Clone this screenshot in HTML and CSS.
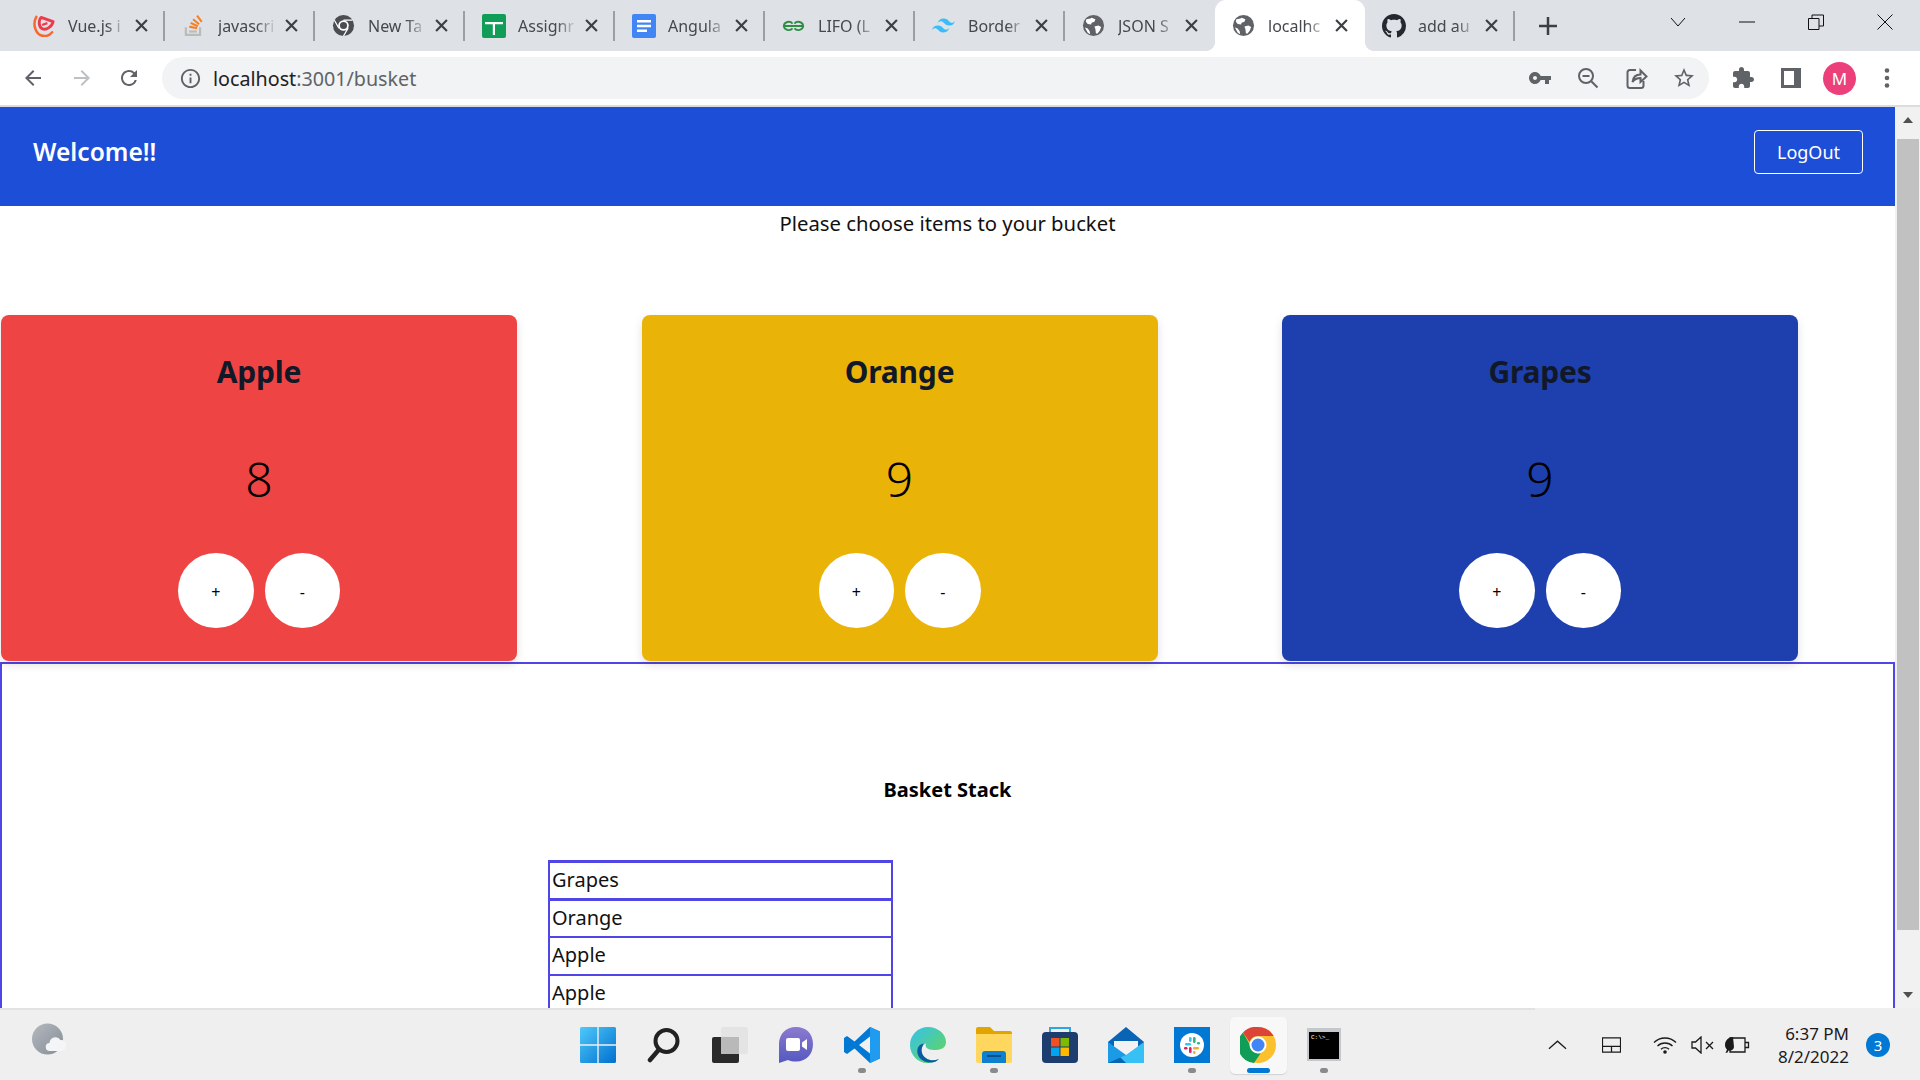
FILE: index.html
```html
<!DOCTYPE html>
<html lang="en">
<head>
    <meta charset="UTF-8">
    <title>localhost:3001/busket</title>
    <link rel="stylesheet" href="styles.css">
</head>
<body>
    <div class="tabstrip">
        <div class="tab">
            <svg class="favicon" viewBox="0 0 24 24"><path d="M4.500 3C.5 10 3 23 13 23c3.500 0 6-1.500 8-4" fill="none" stroke="#f6682f" stroke-width="2.600" stroke-linecap="round"/><path d="M9.500 3.500 22 8c-1 5-7 9-11 7.500C7 14 6.500 7 9.500 3.500z" fill="none" stroke="#ee3a4a" stroke-width="3" stroke-linejoin="round"/><path d="M10.500 11.500 16 9.500" stroke="#ee3a4a" stroke-width="2.400"/></svg>
            <span class="tab-title">Vue.js i</span>
            <svg class="tab-close" viewBox="0 0 12 12"><path d="M1 1 11 11M11 1 1 11"/></svg>
        </div>
        <div class="tab">
            <svg class="favicon" viewBox="2 2 20 21"><path d="M4 14v8h15v-8h-2v6H6v-6z" fill="#bcbbbb"/><path d="M8 17h7v2H8z" fill="#bcbbbb"/><path d="m8 14.500 7 1.500.4-2-7-1.500zM9 11l6.500 3 .8-1.800-6.500-3zM11 7.500l5.500 4.600 1.200-1.500-5.500-4.600zM14.500 4l4.300 5.700 1.500-1.100L16 3z" fill="#f48024"/></svg>
            <span class="tab-title">javascri</span>
            <svg class="tab-close" viewBox="0 0 12 12"><path d="M1 1 11 11M11 1 1 11"/></svg>
        </div>
        <div class="tab">
            <svg class="favicon" viewBox="0 0 24 24"><circle cx="12" cy="12" r="11" fill="#4a4d51"/><circle cx="12" cy="12" r="5.500" fill="#fff"/><circle cx="12" cy="12" r="3.700" fill="#4a4d51"/><path d="M12 6.500h9.500M7.200 14.800 2.500 6.500M16.800 14.800 12 23" stroke="#fff" stroke-width="1.300"/></svg>
            <span class="tab-title">New Ta</span>
            <svg class="tab-close" viewBox="0 0 12 12"><path d="M1 1 11 11M11 1 1 11"/></svg>
        </div>
        <div class="tab">
            <svg class="favicon favicon-big" viewBox="0 0 24 24"><rect width="24" height="24" rx="2" fill="#0f9d58"/><path d="M3 8h18v2.200H13V21h-2.200V10.200H3z" fill="#fff"/></svg>
            <span class="tab-title">Assignr</span>
            <svg class="tab-close" viewBox="0 0 12 12"><path d="M1 1 11 11M11 1 1 11"/></svg>
        </div>
        <div class="tab">
            <svg class="favicon favicon-big" viewBox="0 0 24 24"><rect width="24" height="24" rx="2" fill="#4285f4"/><path d="M5 6h14v2.400H5zM5 10.800h14v2.400H5zM5 15.600h10V18H5z" fill="#fff"/></svg>
            <span class="tab-title">Angula</span>
            <svg class="tab-close" viewBox="0 0 12 12"><path d="M1 1 11 11M11 1 1 11"/></svg>
        </div>
        <div class="tab">
            <svg class="favicon" viewBox="0 0 24 24"><path d="M1 12.500h22M2 12.500a5 4.500 0 0 1 9-2.500M2 12.500a5 4.500 0 0 0 9 2.500M22 12.500a5 4.500 0 0 0-9-2.500M22 12.500a5 4.500 0 0 1-9 2.500" fill="none" stroke="#2f8d46" stroke-width="2"/></svg>
            <span class="tab-title">LIFO (L</span>
            <svg class="tab-close" viewBox="0 0 12 12"><path d="M1 1 11 11M11 1 1 11"/></svg>
        </div>
        <div class="tab">
            <svg class="favicon" viewBox="2 5 20 14"><path d="M12 6c-2.670 0-4.330 1.330-5 4 1-1.330 2.170-1.830 3.500-1.500.76.190 1.300.740 1.910 1.350.980 1 2.120 2.150 4.590 2.150 2.670 0 4.330-1.330 5-4-1 1.330-2.170 1.830-3.500 1.500-.760-.190-1.300-.740-1.910-1.350C15.610 7.150 14.470 6 12 6zm-5 6c-2.670 0-4.330 1.330-5 4 1-1.330 2.170-1.830 3.500-1.500.760.190 1.300.740 1.910 1.350.980 1 2.120 2.150 4.590 2.150 2.670 0 4.330-1.330 5-4-1 1.330-2.170 1.830-3.500 1.500-.760-.190-1.300-.740-1.910-1.350C10.610 13.150 9.470 12 7 12z" fill="#38bdf8"/></svg>
            <span class="tab-title">Border</span>
            <svg class="tab-close" viewBox="0 0 12 12"><path d="M1 1 11 11M11 1 1 11"/></svg>
        </div>
        <div class="tab">
            <svg class="favicon" viewBox="0 0 24 24"><circle cx="12" cy="12" r="11" fill="#5f6368"/><path d="M4.500 5.500c2 0 4-.5 5.500-1.500l4 1.500-1 2.500-3 1-.5 2-3.500-.5L4 8zM13 13l4-1 3 1.500-1.500 4-2.500 3-1.500-.5-.5-4zM3 14l3 1 2 3 .5 3-2.500-1.500z" fill="#fff"/></svg>
            <span class="tab-title">JSON S</span>
            <svg class="tab-close" viewBox="0 0 12 12"><path d="M1 1 11 11M11 1 1 11"/></svg>
        </div>
        <div class="tab tab-active">
            <svg class="favicon" viewBox="0 0 24 24"><circle cx="12" cy="12" r="11" fill="#5f6368"/><path d="M4.500 5.500c2 0 4-.5 5.500-1.500l4 1.500-1 2.500-3 1-.5 2-3.500-.5L4 8zM13 13l4-1 3 1.500-1.500 4-2.500 3-1.500-.5-.5-4zM3 14l3 1 2 3 .5 3-2.500-1.500z" fill="#fff"/></svg>
            <span class="tab-title">localhc</span>
            <svg class="tab-close" viewBox="0 0 12 12"><path d="M1 1 11 11M11 1 1 11"/></svg>
        </div>
        <div class="tab">
            <svg class="favicon favicon-big" viewBox="0 0 16 16"><path d="M8 0C3.580 0 0 3.580 0 8c0 3.540 2.290 6.530 5.470 7.590.4.070.55-.17.55-.38 0-.19-.01-.82-.01-1.490-2.010.37-2.530-.49-2.690-.94-.09-.23-.48-.94-.82-1.130-.28-.15-.68-.52-.01-.53.63-.01 1.080.58 1.230.82.72 1.210 1.870.87 2.330.66.07-.52.28-.87.51-1.070-1.780-.2-3.640-.89-3.640-3.950 0-.87.31-1.590.82-2.150-.08-.2-.36-1.020.08-2.120 0 0 .67-.21 2.200.82.64-.18 1.320-.27 2-.27.68 0 1.360.09 2 .27 1.530-1.040 2.200-.82 2.200-.82.44 1.100.16 1.920.08 2.120.51.56.82 1.270.82 2.150 0 3.070-1.870 3.750-3.650 3.950.29.25.54.73.54 1.480 0 1.070-.01 1.930-.01 2.200 0 .21.15.46.55.38A8.013 8.013 0 0016 8c0-4.420-3.580-8-8-8z" fill="#24292f"/></svg>
            <span class="tab-title">add au</span>
            <svg class="tab-close" viewBox="0 0 12 12"><path d="M1 1 11 11M11 1 1 11"/></svg>
        </div>
        <svg class="new-tab" viewBox="0 0 18 18"><path d="M9 0v18M0 9h18"/></svg>
        <div class="window-controls">
            <svg class="win-btn win-chevron" viewBox="0 0 16 16"><path d="M1 4 8 12 15 4"/></svg>
            <svg class="win-btn win-min" viewBox="0 0 16 16"><path d="M0 8h16"/></svg>
            <svg class="win-btn win-restore" viewBox="0 0 16 16"><path d="M.5 4.500h10.500v11H.5zM4 4.500V1h11.500v11H11"/></svg>
            <svg class="win-btn win-close" viewBox="0 0 16 16"><path d="M.5.500l15 15M15.500.500l-15 15"/></svg>
        </div>
    </div>

    <div class="toolbar">
        <svg class="nav-icon" viewBox="0 0 24 24"><path d="M20 11H7.830l5.590-5.590L12 4l-8 8 8 8 1.410-1.410L7.830 13H20v-2z"/></svg>
        <svg class="nav-icon nav-disabled" viewBox="0 0 24 24"><path d="M12 4l-1.410 1.410L16.170 11H4v2h12.170l-5.580 5.590L12 20l8-8z"/></svg>
        <svg class="nav-icon" viewBox="0 0 24 24"><path d="M17.650 6.350A7.958 7.958 0 0012 4c-4.420 0-7.990 3.580-7.990 8s3.570 8 7.990 8c3.730 0 6.840-2.550 7.730-6h-2.080A5.990 5.990 0 0112 18c-3.310 0-6-2.690-6-6s2.690-6 6-6c1.660 0 3.140.69 4.220 1.780L13 11h7V4l-2.350 2.350z"/></svg>
        <div class="omnibox">
            <svg class="omni-info" viewBox="0 0 24 24"><path d="M11 7h2v2h-2zm0 4h2v6h-2zm1-9C6.480 2 2 6.480 2 12s4.480 10 10 10 10-4.480 10-10S17.520 2 12 2zm0 18c-4.410 0-8-3.590-8-8s3.590-8 8-8 8 3.590 8 8-3.590 8-8 8z"/></svg>
            <span class="url"><span class="url-host">localhost</span>:3001/busket</span>
            <div class="omni-actions">
                <svg class="omni-icon" viewBox="0 0 24 24"><path d="M12.650 10C11.830 7.670 9.610 6 7 6c-3.310 0-6 2.690-6 6s2.690 6 6 6c2.610 0 4.830-1.670 5.650-4H17v4h4v-4h2v-4H12.650zM7 14c-1.100 0-2-.9-2-2s.9-2 2-2 2 .9 2 2-.9 2-2 2z"/></svg>
                <svg class="omni-icon omni-line" viewBox="0 0 24 24"><circle cx="10" cy="10" r="7"/><path d="M6.500 10h7M15 15l6.500 6.500"/></svg>
                <svg class="omni-icon omni-line" viewBox="0 0 24 24"><path d="M12 4H6a2.500 2.500 0 0 0-2.500 2.500v13A2.500 2.500 0 0 0 6 22h11a2.500 2.500 0 0 0 2.500-2.500V15M8.500 16c.5-4.500 3.500-7.500 8-7.500V4.500l6 6-6 5.500v-4c-3 0-6 1-8 4z"/></svg>
                <svg class="omni-icon" viewBox="0 0 24 24"><path d="M22 9.240l-7.190-.62L12 2 9.190 8.630 2 9.240l5.460 4.730L5.820 21 12 17.270 18.180 21l-1.630-7.030L22 9.240zM12 15.400l-3.760 2.270 1-4.280-3.320-2.880 4.380-.38L12 6.100l1.710 4.040 4.380.38-3.320 2.880 1 4.280L12 15.400z"/></svg>
            </div>
        </div>
        <svg class="tool-icon tool-puzzle" viewBox="0 0 24 24"><path d="M20.500 11H19V7c0-1.100-.9-2-2-2h-4V3.500C13 2.120 11.880 1 10.500 1S8 2.120 8 3.500V5H4c-1.100 0-1.990.9-1.990 2v3.800H3.500c1.490 0 2.700 1.210 2.700 2.700s-1.210 2.700-2.700 2.700H2V20c0 1.100.9 2 2 2h3.800v-1.500c0-1.490 1.210-2.700 2.700-2.700 1.490 0 2.700 1.210 2.700 2.700V22H17c1.100 0 2-.9 2-2v-4h1.500c1.380 0 2.500-1.120 2.500-2.500S21.880 11 20.500 11z"/></svg>
        <svg class="tool-icon tool-panel" viewBox="0 0 24 24"><path d="M2 2h20v20H2zM5 5v14h10V5z" fill-rule="evenodd"/></svg>
        <div class="avatar">M</div>
        <svg class="tool-icon tool-dots" viewBox="0 0 24 24"><circle cx="12" cy="4.500" r="2.300"/><circle cx="12" cy="12" r="2.300"/><circle cx="12" cy="19.500" r="2.300"/></svg>
    </div>

    <div class="viewport">
        <div class="page">
            <header class="navbar">
                <span class="brand">Welcome!!</span>
                <button class="logout">LogOut</button>
            </header>
            <p class="intro">Please choose items to your bucket</p>
            <div class="cards">
                <div class="card card-apple">
                    <h2 class="card-title">Apple</h2>
                    <div class="card-count">8</div>
                    <div class="card-buttons">
                        <button class="round-btn">+</button>
                        <button class="round-btn">-</button>
                    </div>
                </div>
                <div class="card card-orange">
                    <h2 class="card-title">Orange</h2>
                    <div class="card-count">9</div>
                    <div class="card-buttons">
                        <button class="round-btn">+</button>
                        <button class="round-btn">-</button>
                    </div>
                </div>
                <div class="card card-grapes">
                    <h2 class="card-title">Grapes</h2>
                    <div class="card-count">9</div>
                    <div class="card-buttons">
                        <button class="round-btn">+</button>
                        <button class="round-btn">-</button>
                    </div>
                </div>
            </div>
            <section class="basket">
                <h3 class="basket-title">Basket Stack</h3>
                <div class="stack">
                    <div class="stack-item">Grapes</div>
                    <div class="stack-item">Orange</div>
                    <div class="stack-item">Apple</div>
                    <div class="stack-item">Apple</div>
                </div>
            </section>
        </div>
        <div class="scrollbar">
            <div class="arrow-up"></div>
            <div class="thumb"></div>
            <div class="arrow-down"></div>
        </div>
    </div>

    <div class="taskbar">
        <svg class="weather" viewBox="0 0 34 32"><defs><linearGradient id="moon" x1="0" y1="0" x2="1" y2="1"><stop offset="0" stop-color="#b4b9bf"/><stop offset="1" stop-color="#868d96"/></linearGradient></defs><circle cx="15.500" cy="16" r="15.500" fill="url(#moon)"/><path d="M18 28a4 4 0 0 1-.5-8 6 6 0 0 1 11-3 5.500 5.500 0 0 1 1 11z" fill="#f4f5f6"/></svg>
        <div class="apps">
            <div class="app">
                <svg class="app-icon" viewBox="0 0 36 36"><defs><linearGradient id="win" x1="0" y1="0" x2="1" y2="1"><stop offset="0" stop-color="#4fc9fa"/><stop offset="1" stop-color="#0070cf"/></linearGradient></defs><path d="M0 1.500A1.500 1.500 0 0 1 1.500 0H17.300v17.300H0zM18.700 0H34.500A1.500 1.500 0 0 1 36 1.500V17.300H18.700zM0 18.700H17.300V36H1.500A1.500 1.500 0 0 1 0 34.500zM18.700 18.700H36V34.500A1.500 1.500 0 0 1 34.500 36H18.700z" fill="url(#win)"/></svg>
            </div>
            <div class="app">
                <svg class="app-icon" viewBox="0 0 36 36"><circle cx="20.500" cy="14" r="11" fill="none" stroke="#222" stroke-width="4"/><path d="M13 22.500 4 33" stroke="#222" stroke-width="4.500" stroke-linecap="round"/></svg>
            </div>
            <div class="app">
                <svg class="app-icon" viewBox="0 0 36 36"><rect x="9" y="0" width="27" height="27" rx="2" fill="#e4e4e4"/><rect x="0" y="10" width="27" height="26" rx="2" fill="#2a2a2a"/><rect x="9" y="10" width="18" height="17" fill="#b9b9b9"/></svg>
            </div>
            <div class="app">
                <svg class="app-icon" viewBox="0 0 36 36"><defs><linearGradient id="chat" x1="0" y1="0" x2="0" y2="1"><stop offset="0" stop-color="#8c7ad0"/><stop offset="1" stop-color="#5458bf"/></linearGradient></defs><path d="M18 0C8 0 1 7 1 17v19l9-3c2.500 1 5 1.500 8 1.500 10 0 17-7 17-17.500S28 0 18 0z" fill="url(#chat)"/><rect x="8" y="11" width="14" height="13" rx="2" fill="#fff"/><path d="M24 15.500 29 12v11l-5-3.500z" fill="#fff"/></svg>
            </div>
            <div class="app">
                <svg class="app-icon" viewBox="0 0 36 36"><path d="M26 0 36 4.500v27L26 36 10.500 21.500 3 27l-3-2V11l3-2 7.500 5.500z" fill="#0078d4"/><path d="M26 0 36 4.500v27L26 36z" fill="#1f9cf0"/><path d="M26 9.500 15 18l11 8.500z" fill="#f0f0f0"/></svg>
            </div>
            <div class="app">
                <svg class="app-icon" viewBox="0 0 36 36"><defs><linearGradient id="edge" x1="0" y1="0" x2="1" y2="1"><stop offset="0" stop-color="#35c1f1"/><stop offset="1" stop-color="#65d84d"/></linearGradient></defs><path d="M18 0C8 0 0 8 0 18c0 10 8 18 17 18 5 0 9-1.500 12-4-7 3-15 .5-17-6-1.500-5 1-9 4-9.500-1.500 3 1 6.500 8 6.500 6 0 12-1.500 12-8C36 7 28 0 18 0z" fill="url(#edge)"/><path d="M14 16.500C8 17 6 23 8 28c2 5 8 8 14 7.500 3-.3 5-1.500 7-3.500-7 3-15 .5-17-6-1.500-5 2-9.500 2-9.500z" fill="#0c59a4"/></svg>
            </div>
            <div class="app">
                <svg class="app-icon" viewBox="0 0 36 36"><path d="M0 2a2 2 0 0 1 2-2h12l4 4h16a2 2 0 0 1 2 2v6H0z" fill="#e2a400"/><path d="M0 7h36v27a2 2 0 0 1-2 2H2a2 2 0 0 1-2-2z" fill="#ffd75e"/><path d="M6 36V27a3 3 0 0 1 3-3h18a3 3 0 0 1 3 3v9z" fill="#0f7fd0"/><path d="M11 28h14v2H11z" fill="#0b4f8a"/></svg>
            </div>
            <div class="app">
                <svg class="app-icon" viewBox="0 0 36 36"><path d="M8 8V1h20v7" fill="none" stroke="#2aa7e0" stroke-width="2"/><rect x="0" y="5" width="36" height="31" rx="4" fill="#1c3d6e"/><path d="M9 11h8.500v8.500H9z" fill="#f25022"/><path d="M18.500 11H27v8.500h-8.500z" fill="#7fba00"/><path d="M9 20.500h8.500V29H9z" fill="#00a4ef"/><path d="M18.500 20.500H27V29h-8.500z" fill="#ffb900"/></svg>
            </div>
            <div class="app">
                <svg class="app-icon" viewBox="0 0 36 36"><path d="M18 0 36 15v21H0V15z" fill="#0a64b5"/><path d="M6 14h24v10L18 32 6 24z" fill="#f2f2f2"/><path d="M36 15v21H18L6 24 18 28z" fill="#37c0f3"/><path d="M0 15 18 28 0 36z" fill="#1b9be5"/></svg>
            </div>
            <div class="app">
                <svg class="app-icon" viewBox="0 0 36 36"><rect width="36" height="36" fill="#0078d4"/><circle cx="18" cy="18" r="12" fill="#fff"/><rect x="11" y="16" width="6" height="2.600" rx="1.300" fill="#36c5f0"/><rect x="15" y="10" width="2.600" height="5" rx="1.300" fill="#36c5f0"/><rect x="19" y="10" width="2.600" height="6" rx="1.300" fill="#2eb67d"/><rect x="23" y="15" width="3" height="2.600" rx="1.300" fill="#2eb67d"/><rect x="19" y="20" width="6" height="2.600" rx="1.300" fill="#ecb22e"/><rect x="19" y="24" width="2.600" height="3" rx="1.300" fill="#ecb22e"/><rect x="15" y="20" width="2.600" height="6" rx="1.300" fill="#e01e5a"/><rect x="10" y="20" width="3.500" height="2.600" rx="1.300" fill="#e01e5a"/></svg>
            </div>
            <div class="app app-active">
                <svg class="app-icon" viewBox="0 0 36 36"><circle cx="18" cy="18" r="18" fill="#fbc02d"/><path d="M18 0a18 18 0 0 1 15.600 9H18a9 9 0 0 0-8.500 6L3 5.500A18 18 0 0 1 18 0z" fill="#db4437"/><path d="M3 5.500 11 20a9 9 0 0 0 9.500 6.500L14 36A18 18 0 0 1 3 5.500z" fill="#0f9d58"/><circle cx="18" cy="18" r="8.500" fill="#fff"/><circle cx="18" cy="18" r="6.500" fill="#4285f4"/></svg>
            </div>
            <div class="app">
                <svg class="app-icon" viewBox="0 0 36 36"><rect x="1" y="1" width="34" height="33" fill="#c4c8cc"/><rect x="3" y="5" width="30" height="27" fill="#000"/><text class="term-text" x="5" y="12">C:\&gt;_</text></svg>
            </div>
        </div>
        <div class="tray">
            <svg class="tray-icon tray-chevron" viewBox="0 0 20 12"><path d="M1 10 10 2l9 8"/></svg>
            <svg class="tray-icon tray-touch" viewBox="0 0 20 16"><path d="M.5.500h19v15H.5zM.5 9.500h19M10 9.500v6"/></svg>
            <svg class="tray-icon tray-wifi" viewBox="0 0 24 18"><path d="M1 6.500c6-6 16-6 22 0M4.500 10c4-4 11-4 15 0M8 13.300c2.200-2.200 5.800-2.200 8 0"/><circle class="tray-fill" cx="12" cy="16" r="1.800"/></svg>
            <svg class="tray-icon tray-sound" viewBox="0 0 24 18"><path d="M1 6h3.500L10 1v16l-5.500-5H1zM15 6l7 7M22 6l-7 7"/></svg>
            <svg class="tray-icon tray-battery" viewBox="0 0 26 18"><path d="M6 2h15v14H6zM21 6.500h3.500v5H21z"/><path class="tray-fill" d="M9 1C4 1 1 5 1 9c0 2 1 3.500 2 4.500L1.500 17l2-.5 1-2c2 .5 5 0 5.500-3.500z"/></svg>
            <div class="clock">
                <span>6:37 PM</span>
                <span>8/2/2022</span>
            </div>
            <div class="notify">3</div>
        </div>
    </div>
</body>
</html>
```

FILE: styles.css
```css
* {
    box-sizing: border-box;
}

html, body {
    margin: 0;
    height: 1080px;
    overflow: hidden;
}

body {
    display: flex;
    flex-direction: column;
    font-family: "Noto Sans", "Open Sans", sans-serif;
    background: #fff;
}

/* browser tabs */
.tabstrip {
    display: flex;
    align-items: center;
    height: 51px;
    padding-left: 15px;
    background: #dee1e6;
}

.tab {
    position: relative;
    display: flex;
    align-items: center;
    flex: none;
    width: 150px;
    height: 51px;
    padding: 0 17px;
}

.tab::after {
    content: "";
    position: absolute;
    right: 0;
    top: 11px;
    width: 2px;
    height: 30px;
    background: #9b9ea3;
}

.tab:nth-child(8)::after,
.tab-active::after {
    display: none;
}

.tab-active {
    background: #fff;
    border-radius: 11px 11px 0 0;
}

.tab-active::before {
    content: "";
    position: absolute;
    left: -10px;
    bottom: 0;
    width: calc(100% + 20px);
    height: 10px;
    background:
        radial-gradient(circle at 0 0, #dee1e6 10px, #fff 10.5px) left / 10px 10px no-repeat,
        radial-gradient(circle at 100% 0, #dee1e6 10px, #fff 10.5px) right / 10px 10px no-repeat;
}

.favicon {
    flex: none;
    width: 23px;
    height: 23px;
    margin-right: 13px;
}

.favicon-big {
    width: 24px;
    height: 24px;
    margin-right: 12px;
}

.tab-title {
    flex: 1;
    min-width: 0;
    overflow: hidden;
    white-space: nowrap;
    font-size: 16px;
    color: #45484c;
    -webkit-mask-image: linear-gradient(to right, #000 65%, transparent 100%);
    mask-image: linear-gradient(to right, #000 65%, transparent 100%);
}

.tab-close {
    flex: none;
    width: 13px;
    height: 13px;
    margin-left: 8px;
    fill: none;
    stroke: #3c4043;
    stroke-width: 2;
}

.new-tab {
    flex: none;
    width: 18px;
    height: 18px;
    margin-left: 24px;
    fill: none;
    stroke: #3c4043;
    stroke-width: 2.5;
}

.window-controls {
    display: flex;
    align-items: center;
    margin-left: auto;
    padding: 0 27px 8px 0;
}

.win-btn {
    flex: none;
    width: 16px;
    height: 16px;
    fill: none;
    stroke: #111;
    stroke-width: 1;
}

.win-min,
.win-restore,
.win-close {
    margin-left: 53px;
}

/* address bar */
.toolbar {
    display: flex;
    align-items: center;
    flex: none;
    height: 56px;
    padding: 0 0 0 21px;
    background: #fff;
    border-bottom: 2px solid #dcdcdc;
}

.nav-icon {
    flex: none;
    width: 24px;
    height: 24px;
    margin-right: 25px;
    fill: #5f6368;
}

.nav-disabled {
    margin-right: 23px;
    fill: #bdc1c6;
}

.omnibox {
    display: flex;
    align-items: center;
    flex: none;
    width: 1547px;
    height: 42px;
    margin-left: -4px;
    padding: 0 13px 0 17px;
    background: #f1f3f4;
    border-radius: 21px;
}

.omni-info {
    flex: none;
    width: 23px;
    height: 23px;
    margin-right: 11px;
    fill: #5f6368;
}

.url {
    font-size: 19.7px;
    color: #5f6368;
}

.url-host {
    color: #202124;
}

.omni-actions {
    display: flex;
    gap: 24px;
    margin-left: auto;
}

.omni-icon {
    width: 24px;
    height: 24px;
    fill: #5f6368;
}

.omni-line {
    fill: none;
    stroke: #5f6368;
    stroke-width: 2;
}

.tool-icon {
    flex: none;
    width: 24px;
    height: 24px;
    fill: #5f6368;
}

.tool-puzzle {
    margin-left: 22px;
}

.tool-panel {
    margin-left: 24px;
}

.avatar {
    display: flex;
    align-items: center;
    justify-content: center;
    flex: none;
    width: 33px;
    height: 33px;
    margin-left: 20px;
    border-radius: 50%;
    background: #ec407a;
    color: #fff;
    font-size: 17px;
}

.tool-dots {
    margin-left: 19px;
}

/* page */
.viewport {
    display: flex;
    flex: none;
    height: 901px;
    overflow: hidden;
}

.page {
    flex: none;
    width: 1895px;
    overflow: hidden;
}

.navbar {
    display: flex;
    align-items: center;
    justify-content: space-between;
    height: 99px;
    padding: 0 32px 10px 33px;
    background: #1d4ed8;
}

.brand {
    font-size: 24.6px;
    font-weight: 600;
    color: #fff;
}

.logout {
    width: 109px;
    height: 44px;
    padding: 0;
    border: 1px solid #fff;
    border-radius: 4px;
    background: transparent;
    color: #fff;
    font: 18px "Noto Sans", sans-serif;
}

.intro {
    margin: 0;
    padding-top: 3px;
    height: 109px;
    text-align: center;
    font-size: 20.3px;
    line-height: 28px;
    color: #111;
}

.cards {
    display: grid;
    grid-template-columns: repeat(3, 516px);
    column-gap: 124.5px;
    padding-left: 1px;
}

.card {
    height: 346px;
    padding-top: 39px;
    border-radius: 8px;
    box-shadow: 0 4px 10px rgba(0, 0, 0, 0.12);
    text-align: center;
}

.card-apple {
    background: #ef4444;
}

.card-orange {
    background: #eab308;
}

.card-grapes {
    background: #1e40af;
}

.card-title {
    margin: 0;
    font-size: 30px;
    font-weight: 700;
    line-height: 36px;
    letter-spacing: -0.2px;
    color: #111827;
}

.card-count {
    margin-top: 65px;
    font-size: 48px;
    font-weight: 300;
    line-height: 48px;
    color: #000;
}

.card-buttons {
    display: flex;
    justify-content: center;
    gap: 11px;
    margin-top: 50px;
}

.round-btn {
    width: 75.5px;
    height: 75px;
    padding: 3px 0 0;
    border: 0;
    border-radius: 50%;
    background: #fff;
    color: #000;
    font: 16px "Noto Sans", sans-serif;
}

.basket {
    margin-top: 1px;
    height: 400px;
    padding-top: 112px;
    border: 2px solid #4f46e5;
    text-align: center;
}

.basket-title {
    margin: 0;
    font-size: 20px;
    font-weight: 700;
    line-height: 28px;
    color: #000;
}

.stack {
    width: 345px;
    margin: 56px 0 0 546px;
    text-align: left;
}

.stack-item {
    height: 40px;
    padding: 0 2px;
    margin-top: -2px;
    border: 2px solid #4f46e5;
    font-size: 20px;
    line-height: 34px;
    color: #111;
}

.stack-item:first-child {
    margin-top: 0;
}

.stack-item:nth-child(-n+2) {
    border-top-width: 3px;
    line-height: 33px;
}

.scrollbar {
    display: flex;
    flex-direction: column;
    align-items: center;
    flex: none;
    width: 25px;
    background: #f1f1f1;
}

.arrow-up,
.arrow-down {
    flex: none;
    width: 0;
    height: 0;
    border-left: 5px solid transparent;
    border-right: 5px solid transparent;
}

.arrow-up {
    margin-top: 10px;
    border-bottom: 6px solid #505050;
}

.arrow-down {
    margin-top: 62px;
    border-top: 6px solid #505050;
}

.thumb {
    flex: none;
    width: 22px;
    height: 791px;
    margin-top: 16px;
    background: #c1c1c1;
}

/* windows taskbar */
.taskbar {
    display: flex;
    align-items: center;
    flex: none;
    height: 72px;
    padding-left: 32px;
    background: #efefef;
    border-top: 2px solid #e2e2e2;
    border-image: linear-gradient(to right, #e2e2e2 1534px, #efefef 1534px) 1;
}

.weather {
    flex: none;
    width: 34px;
    height: 32px;
    margin-bottom: 12px;
}

.apps {
    display: flex;
    flex: none;
    margin-left: 499px;
}

.app {
    position: relative;
    display: flex;
    align-items: center;
    justify-content: center;
    flex: none;
    width: 66px;
    height: 70px;
}

.app-icon {
    width: 36px;
    height: 36px;
}

.app:nth-child(5)::after,
.app:nth-child(7)::after,
.app:nth-child(10)::after,
.app:nth-child(12)::after {
    content: "";
    position: absolute;
    left: 29px;
    bottom: 7px;
    width: 8px;
    height: 5px;
    border-radius: 3px;
    background: #8a8a8a;
}

.app-active::before {
    content: "";
    position: absolute;
    left: 5px;
    top: 7px;
    width: 57px;
    height: 57px;
    border-radius: 5px;
    background: #f8f8f8;
    box-shadow: 0 1px 1px rgba(0, 0, 0, 0.12);
}

.app-active .app-icon {
    position: relative;
}

.app-active::after {
    content: "";
    position: absolute;
    left: 22px;
    bottom: 7px;
    width: 23px;
    height: 5px;
    border-radius: 3px;
    background: #0078d4;
}

.term-text {
    font-family: "Liberation Mono", monospace;
    font-size: 6px;
    fill: #fff;
}

.tray {
    display: flex;
    align-items: center;
    flex: none;
    margin-left: 191px;
}

.tray-icon {
    flex: none;
    fill: none;
    stroke: #1a1a1a;
    stroke-width: 1.3;
}

.tray-fill {
    fill: #1a1a1a;
    stroke: none;
}

.tray-chevron {
    width: 19px;
    height: 12px;
}

.tray-touch {
    width: 19px;
    height: 16px;
    margin-left: 35px;
}

.tray-wifi {
    width: 24px;
    height: 18px;
    margin-left: 32px;
}

.tray-sound {
    width: 24px;
    height: 18px;
    margin-left: 14px;
}

.tray-battery {
    width: 26px;
    height: 18px;
    margin-left: 9px;
}

.clock {
    display: flex;
    flex-direction: column;
    align-items: flex-end;
    width: 99px;
    font-size: 17px;
    line-height: 23px;
    color: #1a1a1a;
}

.notify {
    display: flex;
    align-items: center;
    justify-content: center;
    flex: none;
    width: 24px;
    height: 24px;
    margin-left: 17px;
    border-radius: 50%;
    background: #0078d4;
    color: #fff;
    font-size: 15px;
}
```
